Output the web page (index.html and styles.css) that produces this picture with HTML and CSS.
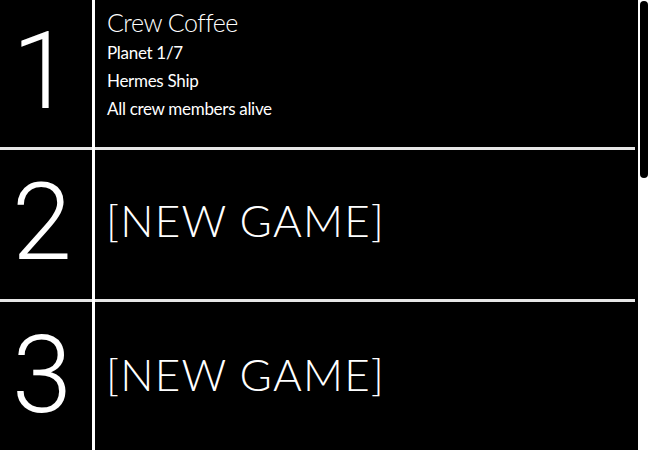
FILE: index.html
```html
<!DOCTYPE html>
<html lang="en">
<head>
<meta charset="utf-8">
<title>Save Slots</title>
<link rel="stylesheet" href="styles.css">
</head>
<body>
<div class="screen">
  <main class="slots">
    <section class="slot slot--saved">
      <div class="slot__num"><span class="slot__digit">1</span></div>
      <div class="slot__sep"></div>
      <div class="slot__body slot__body--info">
        <h2 class="slot__title">Crew Coffee</h2>
        <p class="slot__line">Planet 1/7</p>
        <p class="slot__line">Hermes Ship</p>
        <p class="slot__line">All crew members alive</p>
      </div>
    </section>
    <section class="slot">
      <div class="slot__num"><span class="slot__digit">2</span></div>
      <div class="slot__sep"></div>
      <div class="slot__body"><span class="slot__new">[NEW GAME]</span></div>
    </section>
    <section class="slot slot--last">
      <div class="slot__num"><span class="slot__digit">3</span></div>
      <div class="slot__sep"></div>
      <div class="slot__body"><span class="slot__new">[NEW GAME]</span></div>
    </section>
  </main>
  <div class="scrollbar"><div class="scrollbar__thumb"></div></div>
</div>
</body>
</html>
```

FILE: styles.css
```css
body {
  margin: 0;
  background: #000;
  color: #fff;
  font-family: "Lato", "DejaVu Sans", sans-serif;
  font-weight: 300;
}
.screen {
  display: flex;
  height: 450px;
  overflow: hidden;
}
.slots {
  flex: 1;
  padding-right: 3px;
  display: flex;
  flex-direction: column;
}
.slot {
  display: flex;
  height: 152px;
  flex: none;
}
.slot--saved {
  height: 150px;
}
.slot--last {
  height: 148px;
}
.slot__num {
  width: 92px;
  box-sizing: border-box;
  border-bottom: 3px solid #e6e6e6;
  display: flex;
  align-items: center;
  justify-content: center;
  padding: 0 8px 6px 0;
}
.slot__digit {
  font-family: "Roboto", "Lato", sans-serif;
  font-weight: 300;
  font-size: 108px;
  line-height: 120px;
}
.slot--last .slot__num,
.slot--last .slot__body {
  border-bottom: none;
}
.slot--last .slot__num {
  padding-bottom: 3px;
}
.slot__sep {
  width: 3px;
  background: #fff;
}
.slot__body {
  flex: 1;
  border-bottom: 3px solid #e6e6e6;
  display: flex;
  align-items: center;
  padding: 0 0 9px 11px;
}
.slot--last .slot__body {
  padding-bottom: 4px;
}
.slot__body--info {
  display: block;
  padding: 7px 0 0 12px;
}
.slot__title {
  margin: 0 0 2px;
  font-size: 25px;
  font-weight: 300;
  line-height: 30px;
  letter-spacing: -0.5px;
}
.slot__line {
  margin: 0;
  font-size: 17px;
  font-weight: 400;
  line-height: 28px;
  letter-spacing: -0.3px;
}
.slot__new {
  font-size: 44px;
  line-height: 1;
  letter-spacing: 1.2px;
}
.scrollbar {
  width: 12px;
  flex: none;
  background: #fff;
  padding: 1px 2px 0;
  box-sizing: border-box;
}
.scrollbar__thumb {
  height: 177px;
  background: #000;
  border-radius: 4px;
}
```
